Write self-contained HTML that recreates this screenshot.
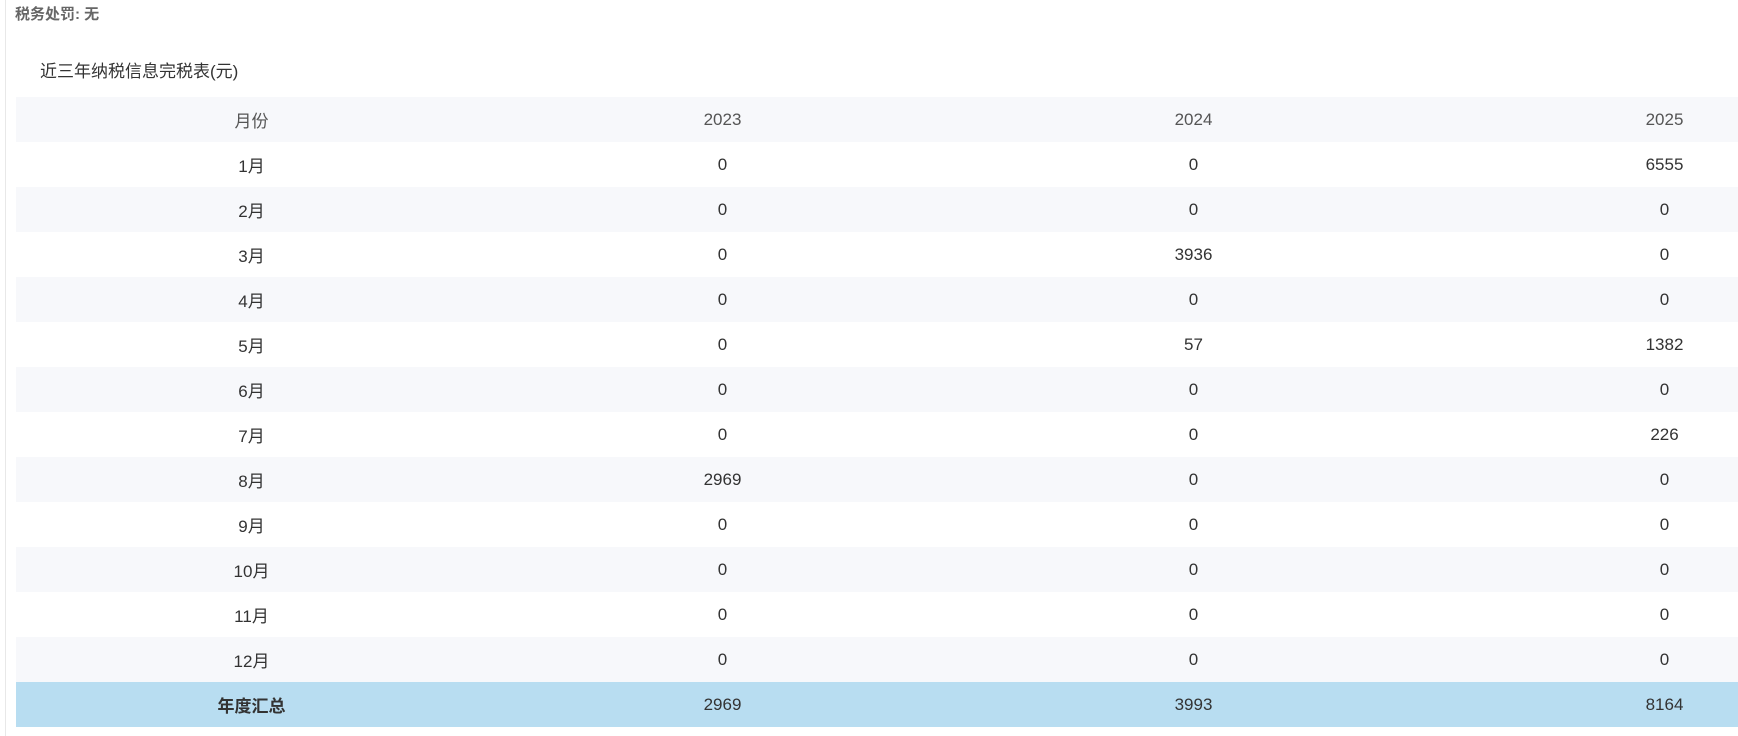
<!DOCTYPE html>
<html><head><meta charset="utf-8"><style>
body{margin:0;width:1738px;height:736px;overflow:hidden;background:#fff;font-family:"Liberation Sans","Noto Sans CJK SC",sans-serif;position:relative}
.vl{position:absolute;left:5px;top:0;width:1px;height:736px;background:#e8e8e8}
.t1{position:absolute;left:15px;top:3px;font-size:15px;font-weight:bold;color:#666}
.t2{position:absolute;left:40px;top:57px;font-size:17px;color:#333}
table{position:absolute;left:16px;top:97px;width:1884px;border-collapse:collapse;table-layout:fixed}
td{height:45px;padding:0;text-align:center;font-size:17px;color:#333}
tr:nth-child(odd){background:#f7f8fb}
tr:nth-child(even){background:#fff}
tr.h td{color:#555}
tr.tot{background:#b8ddf1!important}
tr.tot td{color:#333}
</style></head><body>
<div class="vl"></div>
<div class="t1">税务处罚: 无</div>
<div class="t2">近三年纳税信息完税表(元)</div>
<table>
<tr class="h"><td>月份</td><td>2023</td><td>2024</td><td>2025</td></tr>
<tr><td>1月</td><td>0</td><td>0</td><td>6555</td></tr>
<tr><td>2月</td><td>0</td><td>0</td><td>0</td></tr>
<tr><td>3月</td><td>0</td><td>3936</td><td>0</td></tr>
<tr><td>4月</td><td>0</td><td>0</td><td>0</td></tr>
<tr><td>5月</td><td>0</td><td>57</td><td>1382</td></tr>
<tr><td>6月</td><td>0</td><td>0</td><td>0</td></tr>
<tr><td>7月</td><td>0</td><td>0</td><td>226</td></tr>
<tr><td>8月</td><td>2969</td><td>0</td><td>0</td></tr>
<tr><td>9月</td><td>0</td><td>0</td><td>0</td></tr>
<tr><td>10月</td><td>0</td><td>0</td><td>0</td></tr>
<tr><td>11月</td><td>0</td><td>0</td><td>0</td></tr>
<tr><td>12月</td><td>0</td><td>0</td><td>0</td></tr>
<tr class="tot"><td style="font-weight:bold">年度汇总</td><td>2969</td><td>3993</td><td>8164</td></tr>
</table>
</body></html>
